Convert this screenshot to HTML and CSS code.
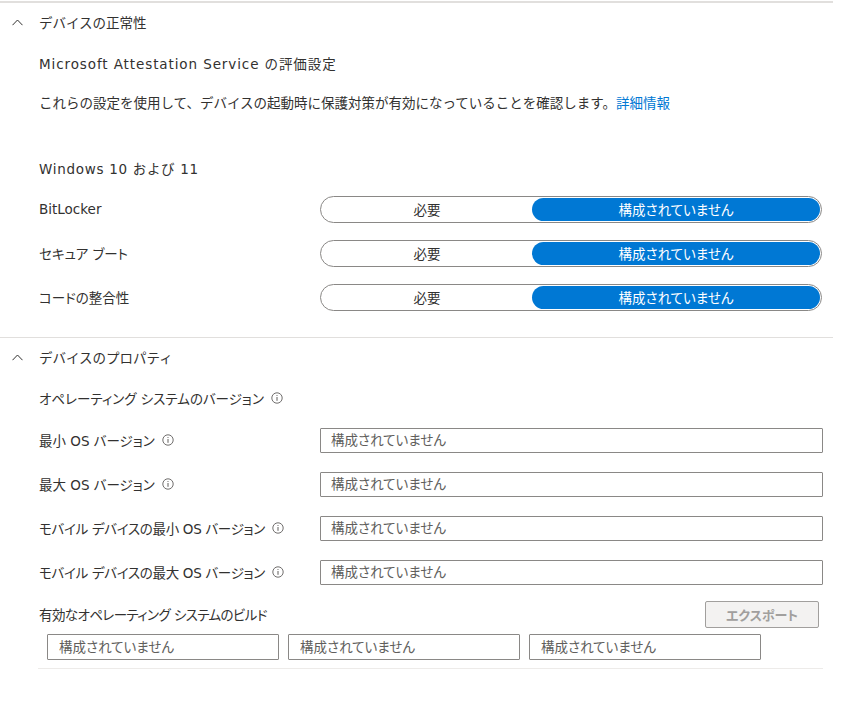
FILE: index.html
```html
<!DOCTYPE html>
<html lang="ja">
<head>
<meta charset="utf-8">
<title>デバイスの正常性</title>
<link rel="stylesheet" href="styles.css">
</head>
<body>
<div class="page">
  <section class="section section-health">
    <div class="section-header">
      <svg class="chevron" width="11" height="7" viewBox="0 0 11 7"><path d="M0.5 6.2 L5.5 1 L10.5 6.2" fill="none" stroke="#323130" stroke-width="1"/></svg>
      <span class="section-title">デバイスの正常性</span>
    </div>
    <div class="line line-mas">Microsoft Attestation Service の評価設定</div>
    <div class="line line-desc">これらの設定を使用して、デバイスの起動時に保護対策が有効になっていることを確認します。<a class="link" href="#">詳細情報</a></div>
    <div class="line line-win">Windows 10 および 11</div>
    <div class="row">
      <div class="label">BitLocker</div>
      <div class="toggle"><span class="opt opt-left">必要</span><span class="opt opt-right">構成されていません</span></div>
    </div>
    <div class="row">
      <div class="label">セキュア ブート</div>
      <div class="toggle"><span class="opt opt-left">必要</span><span class="opt opt-right">構成されていません</span></div>
    </div>
    <div class="row">
      <div class="label">コードの整合性</div>
      <div class="toggle"><span class="opt opt-left">必要</span><span class="opt opt-right">構成されていません</span></div>
    </div>
  </section>

  <section class="section section-props">
    <div class="section-header">
      <svg class="chevron" width="11" height="7" viewBox="0 0 11 7"><path d="M0.5 6.2 L5.5 1 L10.5 6.2" fill="none" stroke="#323130" stroke-width="1"/></svg>
      <span class="section-title">デバイスのプロパティ</span>
    </div>
    <div class="line line-os">オペレーティング システムのバージョン<svg class="info" width="12" height="12" viewBox="0 0 12 12"><circle cx="6" cy="6" r="5.2" fill="none" stroke="#605e5c" stroke-width="0.9"/><line x1="6" y1="5" x2="6" y2="8.8" stroke="#605e5c" stroke-width="1"/><circle cx="6" cy="3.5" r="0.6" fill="#605e5c"/></svg></div>
    <div class="row">
      <div class="label">最小 OS バージョン<svg class="info" width="12" height="12" viewBox="0 0 12 12"><circle cx="6" cy="6" r="5.2" fill="none" stroke="#605e5c" stroke-width="0.9"/><line x1="6" y1="5" x2="6" y2="8.8" stroke="#605e5c" stroke-width="1"/><circle cx="6" cy="3.5" r="0.6" fill="#605e5c"/></svg></div>
      <input class="field" type="text" placeholder="構成されていません">
    </div>
    <div class="row">
      <div class="label">最大 OS バージョン<svg class="info" width="12" height="12" viewBox="0 0 12 12"><circle cx="6" cy="6" r="5.2" fill="none" stroke="#605e5c" stroke-width="0.9"/><line x1="6" y1="5" x2="6" y2="8.8" stroke="#605e5c" stroke-width="1"/><circle cx="6" cy="3.5" r="0.6" fill="#605e5c"/></svg></div>
      <input class="field" type="text" placeholder="構成されていません">
    </div>
    <div class="row">
      <div class="label label-long">モバイル デバイスの最小 OS バージョン<svg class="info" width="12" height="12" viewBox="0 0 12 12"><circle cx="6" cy="6" r="5.2" fill="none" stroke="#605e5c" stroke-width="0.9"/><line x1="6" y1="5" x2="6" y2="8.8" stroke="#605e5c" stroke-width="1"/><circle cx="6" cy="3.5" r="0.6" fill="#605e5c"/></svg></div>
      <input class="field" type="text" placeholder="構成されていません">
    </div>
    <div class="row">
      <div class="label label-long">モバイル デバイスの最大 OS バージョン<svg class="info" width="12" height="12" viewBox="0 0 12 12"><circle cx="6" cy="6" r="5.2" fill="none" stroke="#605e5c" stroke-width="0.9"/><line x1="6" y1="5" x2="6" y2="8.8" stroke="#605e5c" stroke-width="1"/><circle cx="6" cy="3.5" r="0.6" fill="#605e5c"/></svg></div>
      <input class="field" type="text" placeholder="構成されていません">
    </div>
    <div class="builds">
      <div class="builds-head">
        <span class="builds-title">有効なオペレーティング システムのビルド</span>
        <button class="export" type="button" disabled>エクスポート</button>
      </div>
      <div class="builds-fields">
        <input class="build-field" type="text" placeholder="構成されていません">
        <input class="build-field" type="text" placeholder="構成されていません">
        <input class="build-field" type="text" placeholder="構成されていません">
      </div>
    </div>
  </section>
</div>
</body>
</html>
```

FILE: styles.css
```css
html, body {
  margin: 0;
  padding: 0;
  background: #ffffff;
}

body {
  font-family: "DejaVu Sans", "Noto Sans CJK JP", sans-serif;
  font-size: 13.5px;
  color: #323130;
}

.page {
  width: 833px;
  padding-top: 1px;
}

.section {
  border-top: 1px solid #e1dfdd;
}

.section-health {
  border-top-width: 2px;
  padding-bottom: 18px;
}

.section-header {
  display: flex;
  align-items: center;
  height: 38px;
  padding-left: 12px;
}

.chevron {
  display: block;
  margin-right: 16px;
}

.line {
  display: flex;
  align-items: center;
  padding-left: 39px;
}

.line-mas {
  height: 42px;
  margin-top: 1px;
  letter-spacing: 0.9px;
}

.line-desc {
  height: 36px;
  margin-bottom: 29px;
}

.line-win {
  height: 38px;
  letter-spacing: 0.7px;
}

.line-os {
  height: 42px;
  padding-top: 2px;
  box-sizing: border-box;
  font-feature-settings: "palt";
}

.link {
  color: #0078d4;
  text-decoration: none;
}

.row {
  display: flex;
  align-items: center;
  height: 44px;
  padding-left: 39px;
}

.section-health .row:first-of-type {
  margin-top: -1px;
}

.label {
  width: 281px;
  display: flex;
  align-items: center;
  font-feature-settings: "palt";
}

.label-long {
  letter-spacing: -0.3px;
}

.info {
  display: block;
  margin-left: 7px;
}

.toggle {
  box-sizing: border-box;
  width: 502px;
  height: 27px;
  border: 1px solid #8a8886;
  border-radius: 14px;
  padding: 1px;
  display: flex;
}

.opt {
  display: flex;
  align-items: center;
  justify-content: center;
  height: 100%;
  font-feature-settings: "palt";
}

.opt-left {
  width: 210px;
}

.opt-right {
  flex: 1;
  background: #0078d4;
  color: #ffffff;
  border-radius: 12px;
}

.field {
  box-sizing: border-box;
  width: 503px;
  height: 25px;
  margin: 0;
  border: 1px solid #8a8886;
  border-radius: 1px;
  padding: 0 10px;
  font-family: inherit;
  font-size: 13.5px;
  font-feature-settings: "palt";
  color: #323130;
  background: #ffffff;
  outline: none;
}

.field::placeholder,
.build-field::placeholder {
  color: #605e5c;
  opacity: 1;
}

.builds {
  margin-left: 38px;
  width: 785px;
  border-bottom: 1px solid #edebe9;
  padding-bottom: 8px;
}

.builds-head {
  display: flex;
  align-items: center;
  justify-content: space-between;
  height: 40px;
  padding-left: 1px;
  padding-right: 4px;
}

.builds-title {
  font-feature-settings: "palt";
  letter-spacing: -0.6px;
}

.export {
  box-sizing: border-box;
  width: 114px;
  height: 27px;
  border: 1px solid #a19f9d;
  border-radius: 2px;
  background: #f3f2f1;
  color: #a19f9d;
  font-family: inherit;
  font-size: 13px;
  font-weight: 600;
  font-feature-settings: "palt";
  padding: 0;
}

.builds-fields {
  display: flex;
  gap: 9px;
  padding-left: 9px;
}

.build-field {
  box-sizing: border-box;
  width: 232px;
  height: 26px;
  margin: 0;
  border: 1px solid #8a8886;
  border-radius: 1px;
  padding: 0 11px;
  font-family: inherit;
  font-size: 13.5px;
  font-feature-settings: "palt";
  background: #ffffff;
  outline: none;
}
```
